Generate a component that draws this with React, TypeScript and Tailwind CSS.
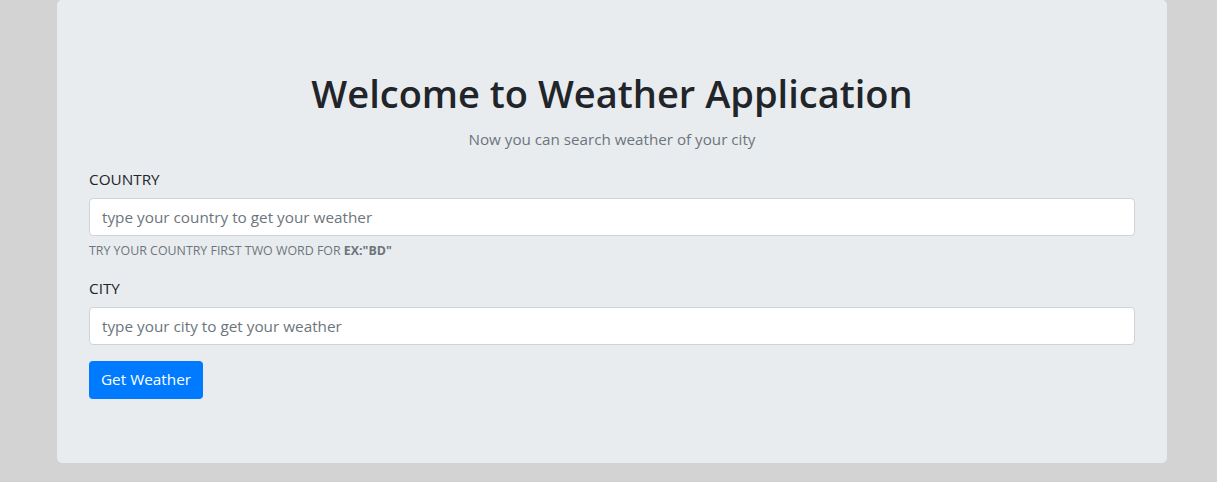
import React from "react";

export default function App() {
  return (
    <div
      className="min-h-screen bg-[#d3d3d3] text-[#212529]"
      style={{ fontFamily: '"Open Sans", "Noto Sans", Arial, sans-serif' }}
    >
      <div className="ml-[57px] w-[1110px]">
        <div className="rounded-[5px] bg-[#e9ecef] px-8 pt-16 pb-16">
          <h1 className="mb-[5px] pt-[2px] text-center text-[38px] font-semibold leading-[55.6px]">
            Welcome to Weather Application
          </h1>
          <p className="text-center text-[15.2px] leading-6 text-[#6c757d]">
            Now you can search weather of your city
          </p>

          <form className="mt-4" onSubmit={(e) => e.preventDefault()}>
            <div className="mb-4">
              <label className="mb-[7px] block text-[15.3px] leading-6">COUNTRY</label>
              <input
                type="text"
                placeholder="type your country to get your weather"
                className="block h-[38px] w-full rounded-[4px] border border-[#ced4da] bg-white px-3 text-[15.3px] text-[#495057] outline-none placeholder:text-[#6c757d]"
              />
              <small className="mt-[5px] block text-[12.4px] leading-[19px] text-[#6c757d]">
                TRY YOUR COUNTRY FIRST TWO WORD FOR <b className="font-bold">EX:"BD"</b>
              </small>
            </div>

            <div className="mb-4">
              <label className="mb-[7px] block text-[15.3px] leading-6">CITY</label>
              <input
                type="text"
                placeholder="type your city to get your weather"
                className="block h-[38px] w-full rounded-[4px] border border-[#ced4da] bg-white px-3 text-[15.3px] text-[#495057] outline-none placeholder:text-[#6c757d]"
              />
            </div>

            <button
              type="submit"
              className="h-[38px] rounded-[4px] bg-[#007bff] px-3 text-[15.3px] text-white"
            >
              Get Weather
            </button>
          </form>
        </div>
      </div>
    </div>
  );
}
